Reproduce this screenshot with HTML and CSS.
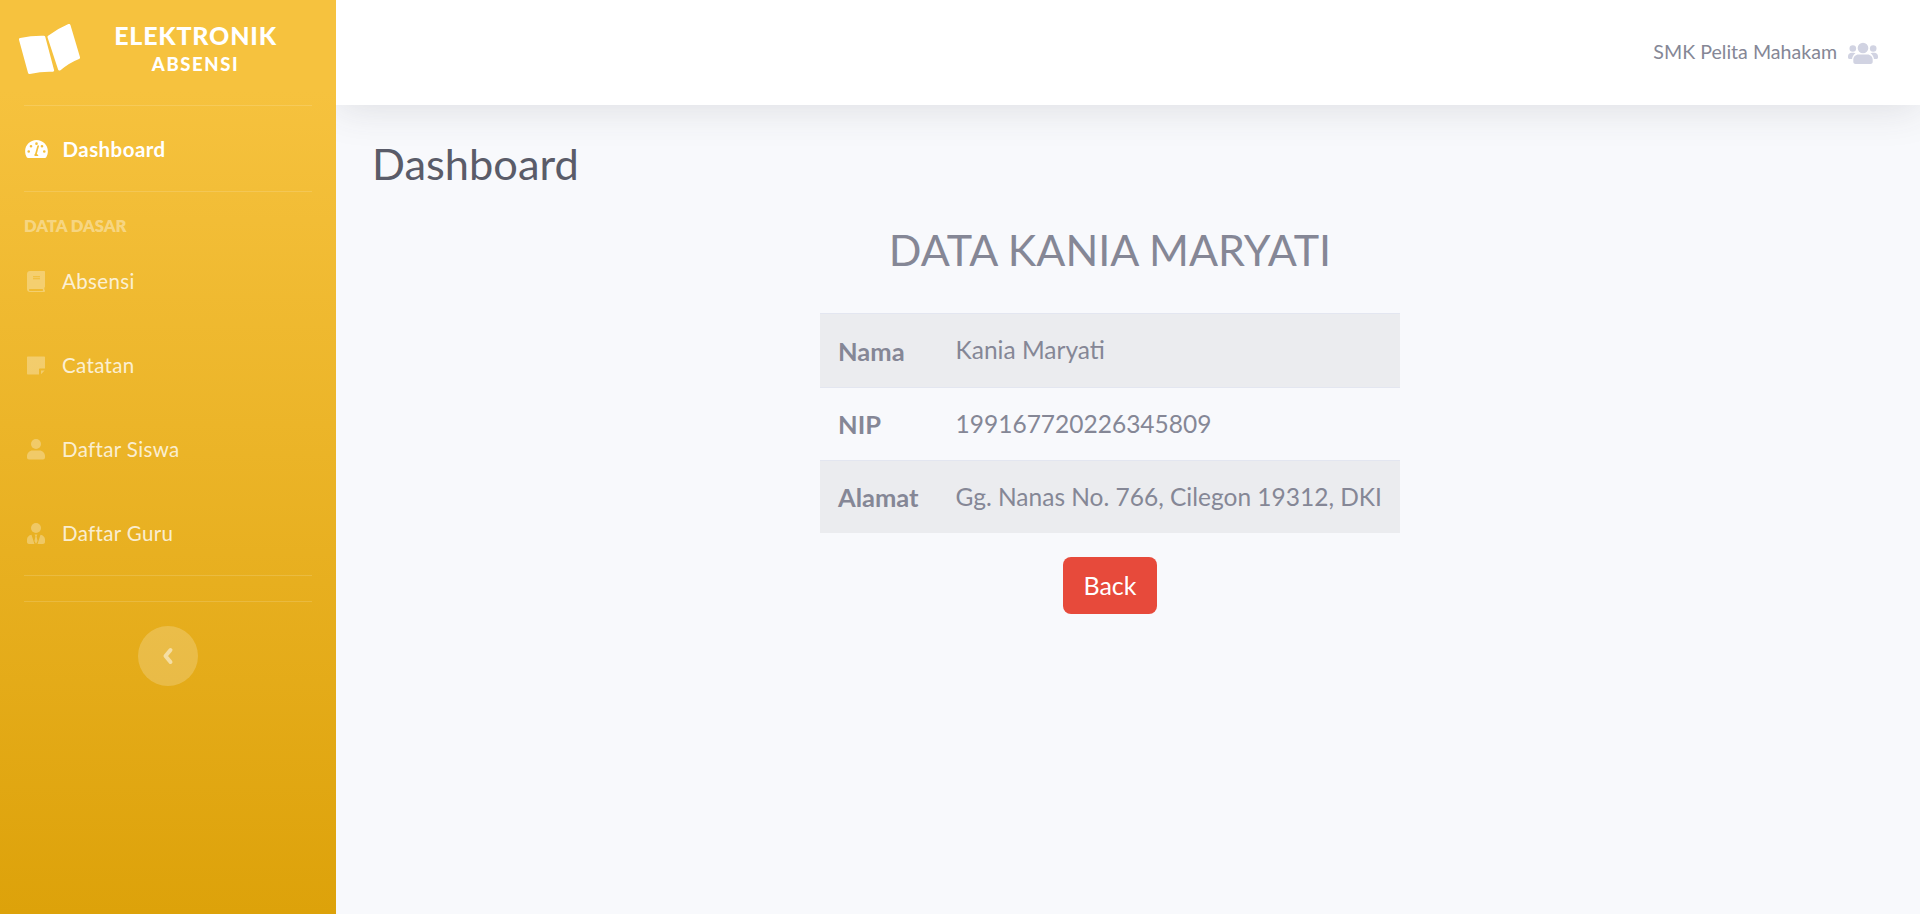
FILE: index.html
```html
<!DOCTYPE html>
<html lang="en">
<head>
    <meta charset="UTF-8">
    <meta name="viewport" content="width=device-width, initial-scale=1.0">
    <title>Dashboard</title>
    <link rel="stylesheet" href="styles.css">
</head>
<body>
    <div class="wrapper">
        <!-- Sidebar -->
        <aside class="sidebar">
            <div class="brand">
                <svg class="brand-icon" viewBox="0 0 62 51" aria-hidden="true">
                    <path d="M1.500 15.500C9 13.800 17 13 24.800 13.200L33.600 46.300C26 45.900 18 46.900 10.500 48.500z"/>
                    <path d="M30 13C36 8.500 43 4.500 50 1.500L59.500 33.500C53 36 46.500 40 40.500 45z"/>
                </svg>
                <div class="brand-text">
                    <div class="brand-title">ELEKTRONIK</div>
                    <div class="brand-sub">ABSENSI</div>
                </div>
            </div>
            <hr class="divider">
            <a class="nav-item active" href="#">
                <svg class="nav-icon" viewBox="0 0 24 19" aria-hidden="true">
                    <path fill-rule="evenodd" d="M12 0C5.400 0 0 5.300 0 11.800c0 2.300.6 4.500 1.700 6.300.3.500.8.900 1.400.9h17.800c.6 0 1.100-.4 1.400-.9 1.100-1.800 1.700-4 1.700-6.300C24 5.300 18.600 0 12 0zm0 2.500a1.400 1.400 0 1 1 0 2.800 1.400 1.400 0 0 1 0-2.800zM3.800 13.500a1.400 1.400 0 1 1 0-2.800 1.400 1.400 0 0 1 0 2.800zM6.200 8a1.400 1.400 0 1 1 0-2.800 1.400 1.400 0 0 1 0 2.800zM14 17h-4a2.300 2.300 0 0 1 .6-2.800l2.300-8c.1-.5.6-.8 1.100-.6.500.1.800.6.600 1.100l-2.300 8A2.500 2.500 0 0 1 14 17zm3.800-9a1.400 1.400 0 1 1 0-2.800 1.400 1.400 0 0 1 0 2.800zm2.400 5.500a1.400 1.400 0 1 1 0-2.800 1.400 1.400 0 0 1 0 2.800z"/>
                </svg>
                <span>Dashboard</span>
            </a>
            <hr class="divider">
            <div class="nav-heading">DATA DASAR</div>
            <a class="nav-item" href="#">
                <svg class="nav-icon" viewBox="0 0 18 21" aria-hidden="true">
                    <path fill-rule="evenodd" d="M3 0h14c.6 0 1 .4 1 1v14.500c0 .4-.2.7-.5.9-.2.800-.2 1.900 0 2.600.3.200.5.500.5.800v.2c0 .5-.4 1-1 1H3c-1.700 0-3-1.300-3-3V3c0-1.700 1.300-3 3-3zm3 5.500v.5c0 .2.100.3.300.3h6.400c.2 0 .3-.1.300-.3v-.5c0-.2-.1-.3-.3-.3H6.300c-.2 0-.3.100-.3.300zm0 2v.5c0 .2.100.3.300.3h6.400c.2 0 .3-.1.300-.3v-.5c0-.2-.1-.3-.3-.3H6.300c-.2 0-.3.100-.3.300zM15.900 18H3c-.6 0-1 .4-1 1s.4 1 1 1h12.900c-.1-.6-.1-1.400 0-2z"/>
                </svg>
                <span>Absensi</span>
            </a>
            <a class="nav-item" href="#">
                <svg class="nav-icon" viewBox="0 0 18 18" aria-hidden="true">
                    <path d="M1 0h16c.6 0 1 .4 1 1v11h-5c-.6 0-1 .4-1 1v5H1c-.6 0-1-.4-1-1V1c0-.6.4-1 1-1zm16.700 14L14 17.700V14z"/>
                </svg>
                <span>Catatan</span>
            </a>
            <a class="nav-item" href="#">
                <svg class="nav-icon" viewBox="0 0 18 21" aria-hidden="true">
                    <circle cx="9" cy="5" r="5"/>
                    <path d="M5.500 11.500h7c3 0 5.500 2.500 5.500 5.500v1.500c0 1.200-.9 2-2 2H2c-1.100 0-2-.8-2-2V17c0-3 2.500-5.500 5.500-5.500z"/>
                </svg>
                <span>Daftar Siswa</span>
            </a>
            <a class="nav-item" href="#">
                <svg class="nav-icon" viewBox="0 0 18 21" aria-hidden="true">
                    <circle cx="9" cy="5" r="5"/>
                    <path d="M4.500 11.700 7.500 21H2c-1.100 0-2-.8-2-2v-2.500c0-2.300 1.900-4.500 4.500-4.800zm9 0c2.600.3 4.500 2.500 4.500 4.800V19c0 1.100-.9 2-2 2h-5.500zM7.600 11.500h2.800l-.8 2 1 4.500L9 21l-1.600-3 1-4.500z"/>
                </svg>
                <span>Daftar Guru</span>
            </a>
            <hr class="divider divider-end">
            <hr class="divider">
            <button class="sidebar-toggle" type="button" aria-label="Toggle sidebar">
                <svg viewBox="0 0 12 18" aria-hidden="true"><path d="M8.500 3 3.500 9l5 6" fill="none" stroke="currentColor" stroke-width="4" stroke-linecap="round" stroke-linejoin="round"/></svg>
            </button>
        </aside>

        <div class="content">
            <!-- Topbar -->
            <header class="topbar">
                <span class="topbar-name">SMK Pelita Mahakam</span>
                <svg class="topbar-icon" viewBox="0 0 30 22" aria-hidden="true">
                    <circle cx="15" cy="6" r="5.300"/>
                    <circle cx="4.800" cy="6.500" r="3.300"/>
                    <circle cx="25.200" cy="6.500" r="3.300"/>
                    <path d="M10.500 12.500h9c2.900 0 5.200 2.300 5.200 5.200v2c0 1.300-1 2.300-2.300 2.300H7.600c-1.300 0-2.300-1-2.300-2.300v-2c0-2.900 2.300-5.200 5.200-5.200z"/>
                    <path d="M7.500 11.200C5.600 12.500 4.300 14.600 4 17H1.500C.7 17 0 16.300 0 15.500v-1.200C0 12 1.800 10.700 3.700 10.700h2c.7 0 1.300.2 1.800.5zM22.500 11.200c1.900 1.300 3.200 3.400 3.500 5.800h2.500c.8 0 1.500-.7 1.500-1.500v-1.200c0-2.300-1.800-3.600-3.700-3.600h-2c-.7 0-1.300.2-1.800.5z"/>
                </svg>
            </header>

            <main class="main">
                <h1 class="page-title">Dashboard</h1>
                <h2 class="data-title">DATA KANIA MARYATI</h2>
                <table class="data-table">
                    <tr>
                        <th>Nama</th>
                        <td>Kania Maryati</td>
                    </tr>
                    <tr>
                        <th>NIP</th>
                        <td>199167720226345809</td>
                    </tr>
                    <tr>
                        <th>Alamat</th>
                        <td>Gg. Nanas No. 766, Cilegon 19312, DKI</td>
                    </tr>
                </table>
                <a class="btn-back" href="#">Back</a>
            </main>
        </div>
    </div>
</body>
</html>
```

FILE: styles.css
```css
* {
    margin: 0;
    padding: 0;
    box-sizing: border-box;
}

body {
    font-family: 'Lato', 'Noto Sans', sans-serif;
    background: #f8f9fc;
    color: #858796;
    height: 100vh;
    overflow: hidden;
}

.wrapper {
    display: flex;
    height: 914px;
}

/* Sidebar */
.sidebar {
    width: 336px;
    flex-shrink: 0;
    background: linear-gradient(180deg, #f6c23e 10%, #dda20a 100%);
    padding: 0 24px;
    display: flex;
    flex-direction: column;
    position: relative;
    z-index: 1;
}

.brand {
    height: 105px;
    margin: 0 -5px;
    display: flex;
    color: #fff;
    padding-top: 24px;
}

.brand-icon {
    width: 62px;
    height: 51px;
    fill: #fff;
    stroke: #fff;
    stroke-width: 3;
    stroke-linejoin: round;
    flex-shrink: 0;
}

.brand-text {
    flex: 1;
    text-align: center;
    font-weight: 900;
    padding-right: 7px;
}

.brand-title {
    font-size: 25px;
    line-height: 26px;
    letter-spacing: 0.800px;
    margin-top: -2px;
}

.brand-sub {
    font-size: 18.500px;
    line-height: 26px;
    margin-top: 3px;
    letter-spacing: 1.600px;
}

.divider {
    border: none;
    border-top: 1px solid rgba(255, 255, 255, 0.15);
}

.divider-end {
    margin-bottom: 25px;
}

.nav-item {
    height: 84px;
    display: flex;
    align-items: center;
    gap: 17px;
    color: rgba(255, 255, 255, 0.8);
    text-decoration: none;
    font-size: 20.500px;
    letter-spacing: 0.350px;
    padding-left: 3px;
}

.nav-item.active {
    height: 85px;
    color: #fff;
    font-weight: 700;
    letter-spacing: 0.450px;
    padding-left: 1px;
}

.nav-icon {
    width: 18px;
    height: 21px;
    fill: rgba(255, 255, 255, 0.3);
    flex-shrink: 0;
}

.nav-item.active .nav-icon {
    width: 23px;
    height: 18px;
    fill: #fff;
    margin-right: -2.500px;
}

.nav-heading {
    font-size: 16.600px;
    font-weight: 800;
    color: rgba(255, 255, 255, 0.4);
    margin: 24px 0 3px;
    line-height: 20px;
}

.sidebar-toggle {
    width: 60px;
    height: 60px;
    border-radius: 50%;
    border: none;
    background: rgba(255, 255, 255, 0.2);
    color: rgba(255, 255, 255, 0.5);
    align-self: center;
    margin-top: 24px;
    display: flex;
    align-items: center;
    justify-content: center;
}

.sidebar-toggle svg {
    width: 12px;
    height: 18px;
}

/* Topbar and main */
.content {
    flex: 1;
    display: flex;
    flex-direction: column;
    min-width: 0;
}

.topbar {
    height: 105px;
    background: #fff;
    box-shadow: 0 2.400px 42px rgba(58, 59, 69, 0.15);
    display: flex;
    align-items: center;
    justify-content: flex-end;
    padding: 0 42px 0 0;
    gap: 11px;
}

.topbar-name {
    font-size: 19.600px;
    margin-bottom: 2px;
}

.topbar-icon {
    width: 30px;
    height: 22px;
    fill: #d1d3e2;
}

.main {
    padding: 0 72px 0 36px;
    display: flex;
    flex-direction: column;
    align-items: center;
}

.page-title {
    align-self: flex-start;
    font-size: 43.400px;
    font-weight: 400;
    color: #5a5c69;
    line-height: 50px;
    margin-top: 33px;
}

.data-title {
    font-size: 43px;
    font-weight: 400;
    color: #858796;
    line-height: 50px;
    margin-top: 37px;
}

.data-table {
    border-collapse: collapse;
    margin-top: 38px;
    font-size: 24.500px;
    color: #858796;
}

.data-table th {
    text-align: left;
    font-size: 25.500px;
    font-weight: 700;
    padding-right: 19px;
}

.data-table th,
.data-table td {
    padding-top: 18px;
    padding-bottom: 18px;
    padding-left: 18px;
    line-height: 36px;
    border-top: 1px solid #e3e6f0;
}

.data-table td {
    padding-right: 18px;
}

.data-table tr:first-child td {
    padding-bottom: 19px;
}

.data-table tr:nth-child(odd) {
    background: rgba(0, 0, 0, 0.05);
}

.btn-back {
    margin-top: 24px;
    background: #e74a3b;
    color: #fff;
    font-size: 25px;
    line-height: 36px;
    padding: 10px 20px 11px;
    border-radius: 8px;
    text-decoration: none;
}
```
